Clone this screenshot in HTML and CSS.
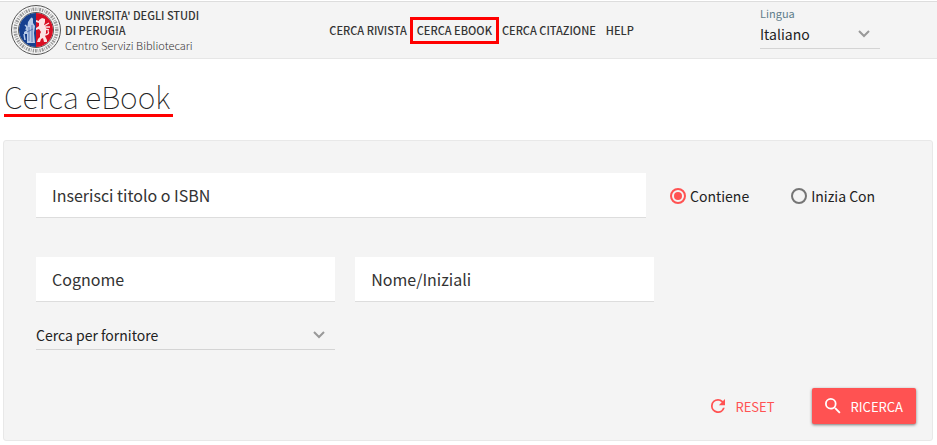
FILE: index.html
```html
<!DOCTYPE html>
<html lang="it">
<head>
    <meta charset="utf-8">
    <title>Cerca eBook</title>
    <link rel="stylesheet" href="styles.css">
</head>
<body>
    <header class="header">
        <a class="brand" href="#">
            <svg class="seal" viewBox="0 0 50 50" aria-hidden="true">
                <circle cx="25" cy="25" r="24.500" fill="#f4f4f4" stroke="#555" />
                <circle cx="25" cy="25" r="20.800" fill="none" stroke="#999" stroke-width="3.500" stroke-dasharray="1.300 1.200 0.700 0.900 1.800 1" />
                <circle cx="25" cy="25" r="17.500" fill="#fff" stroke="#555" />
                <path d="M25 8a17 17 0 0 0 0 34z" fill="#17408f" />
                <path d="M25 8a17 17 0 0 1 0 34z" fill="#d90f24" />
                <!-- saint -->
                <path d="M19 14q2-3 3 0l0 4 2 3-1 7 1 10-8 0 0-9-3 0 0-2 3-2 1-8z" fill="#b9cbe8" />
                <path d="M14 20l2 2-1 3M13 29l1 6" fill="none" stroke="#b9cbe8" stroke-width="1.500" />
                <path d="M18 22v14M21 20v17M16 27l6-3" fill="none" stroke="#4265a8" stroke-width="0.800" />
                <!-- griffin -->
                <path d="M28 15l3-2 3 1 0 3-1 3 2 3 0 5-1 3 2 4 0 2-3 0-1-4-2 1-1 3-3 0 1-3 2-2 0-3 1-2-2-3-3 1 0-2 3-2 0-3-3-1 0-2 3 1z" fill="#fbe3e5" />
                <path d="M33 21l5-3M33 22l6 0M34 24l4 1M34 30q5-1 3-4" fill="none" stroke="#fbe3e5" stroke-width="1.300" />
            </svg>
            <span class="brand-text"><strong>UNIVERSITA' DEGLI STUDI<br>DI PERUGIA</strong><br>Centro Servizi Bibliotecari</span>
        </a>
        <nav class="nav">
            <a href="#">CERCA RIVISTA</a>
            <a class="active" href="#">CERCA EBOOK</a>
            <a href="#">CERCA CITAZIONE</a>
            <a href="#">HELP</a>
        </nav>
        <div class="language">
            <label for="lingua">Lingua</label>
            <div class="select">
                <select id="lingua">
                    <option>Italiano</option>
                    <option>English</option>
                </select>
                <svg viewBox="0 0 12 8" aria-hidden="true"><path d="M1 1l5 5 5-5" /></svg>
            </div>
        </div>
    </header>

    <main class="main">
        <h1>Cerca eBook</h1>
        <form class="search">
            <div class="row">
                <input class="field title-field" type="text" placeholder="Inserisci titolo o ISBN" aria-label="Inserisci titolo o ISBN">
                <div class="radios">
                    <label><input type="radio" name="match" checked>Contiene</label>
                    <label><input type="radio" name="match">Inizia Con</label>
                </div>
            </div>
            <div class="row authors">
                <input class="field" type="text" placeholder="Cognome" aria-label="Cognome">
                <input class="field" type="text" placeholder="Nome/Iniziali" aria-label="Nome/Iniziali">
            </div>
            <div class="select vendor">
                <select aria-label="Cerca per fornitore">
                    <option>Cerca per fornitore</option>
                </select>
                <svg viewBox="0 0 12 8" aria-hidden="true"><path d="M1 1l5 5 5-5" /></svg>
            </div>
            <div class="actions">
                <button class="reset" type="reset">
                    <svg viewBox="4 4 16 16" aria-hidden="true"><path d="M17.650 6.350A7.960 7.960 0 0 0 12 4a8 8 0 1 0 7.730 10h-2.080A6 6 0 1 1 12 6c1.660 0 3.140.690 4.220 1.780L13 11h7V4z" /></svg>
                    RESET
                </button>
                <button class="submit" type="submit">
                    <svg viewBox="3 3 18 18" aria-hidden="true"><path d="M15.500 14h-.790l-.280-.270A6.470 6.470 0 0 0 16 9.500 6.500 6.500 0 1 0 9.500 16c1.610 0 3.090-.590 4.230-1.570l.270.280v.790l5 4.990L20.490 19zm-6 0a4.500 4.500 0 1 1 0-9 4.500 4.500 0 0 1 0 9z" /></svg>
                    RICERCA
                </button>
            </div>
        </form>
    </main>
</body>
</html>
```

FILE: styles.css
```css
* {
    box-sizing: border-box;
}

body {
    margin: 0;
    background-color: #fff;
    color: #222;
    font-family: "Noto Sans CJK SC", "Open Sans", sans-serif;
    font-size: 14px;
}

input,
select,
button {
    font: inherit;
    color: inherit;
}

a {
    color: #333;
    text-decoration: none;
}

.header {
    display: flex;
    justify-content: space-between;
    margin-top: 1px;
    padding: 0 57px 0 11px;
    height: 58px;
    background-color: #f4f4f4;
    border-top: 1px solid #ddd;
    border-bottom: 1px solid #e6e6e6;
}

.brand {
    display: flex;
    align-items: center;
    gap: 4px;
}

.seal {
    width: 50px;
    height: 50px;
}

.brand-text {
    font-size: 11px;
    line-height: 15px;
    font-weight: 300;
}

.brand-text strong {
    font-weight: 500;
}

.nav {
    display: flex;
    align-items: center;
    gap: 10px;
    padding-left: 4px;
    font-size: 11px;
    line-height: 13px;
    font-weight: 500;
}

.nav .active {
    outline: 3px solid #f00;
    outline-offset: 4px;
}

.language {
    width: 120px;
    padding-top: 3px;
}

.language label {
    display: block;
    font-size: 11px;
    line-height: 16px;
    color: #607d8b;
}

.select {
    display: grid;
    align-items: center;
    padding-bottom: 2px;
    border-bottom: 1px solid #d4d4d4;
}

.select select,
.select svg {
    grid-area: 1 / 1;
}

.select select {
    width: 100%;
    height: 25px;
    padding: 0;
    border: none;
    background: none;
    appearance: none;
}

.select svg {
    width: 12px;
    height: 8px;
    margin-right: 10px;
    justify-self: end;
    fill: none;
    stroke: #999;
    stroke-width: 2;
    pointer-events: none;
}

.main {
    padding: 20px 4px 4px 3px;
}

h1 {
    width: fit-content;
    margin: 0 0 23px 1px;
    padding-right: 3px;
    border-bottom: 3px solid #f00;
    font-size: 30px;
    line-height: 35px;
    font-weight: 100;
}

.search {
    padding: 32px 16px 16px 32px;
    background-color: #f4f4f4;
    border: 1px solid #e8e8e8;
    border-radius: 3px;
}

.row {
    display: flex;
    gap: 24px;
}

.field {
    height: 45px;
    padding: 0 16px;
    border: none;
    border-bottom: 1px solid #ddd;
    border-radius: 0;
    background-color: #fff;
    font-size: 16px;
}

.field::placeholder {
    color: #333;
    opacity: 1;
}

.title-field {
    flex: 1;
}

.radios {
    display: flex;
    gap: 42px;
    width: 246px;
}

.radios label {
    display: flex;
    align-items: center;
    gap: 4px;
}

.radios input {
    display: grid;
    place-content: center;
    width: 16px;
    height: 16px;
    margin: 0;
    border: 2px solid #757575;
    border-radius: 50%;
    appearance: none;
}

.radios input:checked {
    border-color: #ff5252;
}

.radios input:checked::before {
    content: "";
    width: 8px;
    height: 8px;
    border-radius: 50%;
    background-color: #ff5252;
}

.authors {
    gap: 20px;
    margin-top: 39px;
}

.authors .field,
.vendor {
    width: 34%;
}

.vendor {
    margin-top: 20px;
}

.actions {
    display: flex;
    justify-content: flex-end;
    gap: 24px;
    margin-top: 38px;
}

.actions button {
    display: flex;
    align-items: center;
    height: 36px;
    padding: 0 13px;
    border: none;
    border-radius: 2px;
    background: none;
    font-size: 13px;
    cursor: pointer;
}

.actions svg {
    fill: currentColor;
}

.actions .reset {
    gap: 10px;
    color: #ff5252;
}

.reset svg {
    width: 14px;
    height: 14px;
}

.actions .submit {
    gap: 10px;
    background-color: #ff5252;
    color: #fff;
    box-shadow: 0 1px 3px rgba(0, 0, 0, 0.5);
}

.submit svg {
    width: 16px;
    height: 16px;
}
```
